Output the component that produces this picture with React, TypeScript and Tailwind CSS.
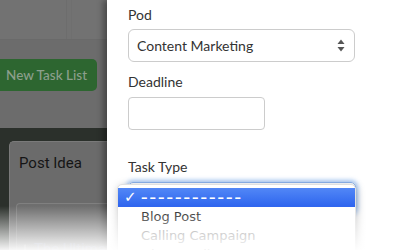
import React from "react";

export default function App() {
  return (
    <div className="relative w-[400px] h-[250px] overflow-hidden flex bg-white" style={{ fontFamily: "Lato, 'Open Sans', sans-serif" }}>
      {/* left dimmed app area */}
      <div className="w-[107px] shrink-0 bg-[#6c6c6c] flex flex-col">
        <div className="h-[40px] shrink-0 bg-[#727272] border-b border-[#6a6a6a] flex">
          <div className="w-[67px] border-r border-[#6d6d6d]" />
          <div className="w-[5px] border-r border-[#6f6f6f]" />
        </div>
        <div className="mt-[19px] h-[32px] w-[97px] shrink-0 bg-[#2d6630] rounded-r-[5px] flex items-center pl-[6px] text-[13.5px] font-medium text-[#8c9f8c] whitespace-nowrap">
          New Task List
        </div>
        <div className="mt-[37px] flex-1 bg-[#2b302b] pt-[13px] pl-[9px]">
          <div className="h-full bg-[#6b6b6b] rounded-tl-[5px] border-t border-l border-[#7a7a7a] pl-[9px] pt-[11px]" style={{ fontFamily: "Roboto, 'Liberation Sans', sans-serif" }}>
            <div className="text-[15px] leading-[20px] text-[#151515]">Post Idea</div>
            <div className="mt-[30px] ml-[-3px] h-[60px] bg-[#6e6e6e] rounded-tl-[4px] border-t border-l border-[#808080] pl-[7px] pt-[32px] flex items-center gap-[8px]">
              <div className="w-[12px] h-[12px] border border-[#8a8a8a] rounded-[2px]" />
              <div className="text-[15px] text-[#7c8096] whitespace-nowrap">The Ultimate</div>
            </div>
          </div>
        </div>
      </div>

      {/* modal panel */}
      <div className="relative z-10 flex-1 bg-white shadow-[-4px_0_6px_rgba(0,0,0,0.35)] pl-[21px] pt-[5px] text-[#333]">
        <div className="text-[14px] leading-[20px]">Pod</div>
        <div className="mt-[4px] w-[227px] h-[33px] border border-[#cccccc] rounded-[6px] flex items-center pl-[8px] pr-[9px] text-[14px] text-[#333]">
          <span className="flex-1">Content Marketing</span>
          <svg width="8" height="13" viewBox="0 0 8 13">
            <path d="M4 0.5 L7.5 5 L0.5 5 Z" fill="#555" />
            <path d="M4 12.5 L7.5 8 L0.5 8 Z" fill="#555" />
          </svg>
        </div>
        <div className="mt-[10px] text-[14px] leading-[20px]">Deadline</div>
        <div className="mt-[5px] w-[137px] h-[33px] border border-[#cccccc] rounded-[4px]" />
        <div className="mt-[27px] text-[14px] leading-[20px]">Task Type</div>
        <div className="relative mt-[5px] w-[228px] h-[32px] border border-[#8db4ec] rounded-[5px] shadow-[0_0_4px_2px_rgba(100,160,240,0.55)]">
          <div className="absolute left-[-12px] top-[1px] w-[239px] bg-white rounded-t-[5px] border border-[#e0e0e0] shadow-[1px_2px_8px_rgba(0,0,0,0.25)] pt-[3px] pb-[20px]" style={{ fontFamily: "'DejaVu Sans', Verdana, sans-serif" }}>
            <div className="h-[19px] flex items-center text-white text-[13px] bg-gradient-to-b from-[#5287f6] to-[#2d63ee]">
              <span className="w-[23px] pl-[6px] font-bold text-[15px] leading-none">✓</span>
              <span className="font-bold tracking-[2px]">––––––––––––</span>
            </div>
            <div className="h-[19px] flex items-center text-[13px] text-[#222] pl-[23px]">Blog Post</div>
            <div className="h-[19px] flex items-center text-[13px] text-[#8a8a8a] pl-[23px]">Calling Campaign</div>
            <div className="h-[19px] flex items-center text-[13px] text-[#222] pl-[23px]">Direct Mail</div>
          </div>
        </div>
      </div>

      {/* bottom fade */}
      <div className="absolute inset-x-0 bottom-0 h-[44px] z-20 bg-gradient-to-b from-white/0 to-white/95 pointer-events-none" />
    </div>
  );
}
